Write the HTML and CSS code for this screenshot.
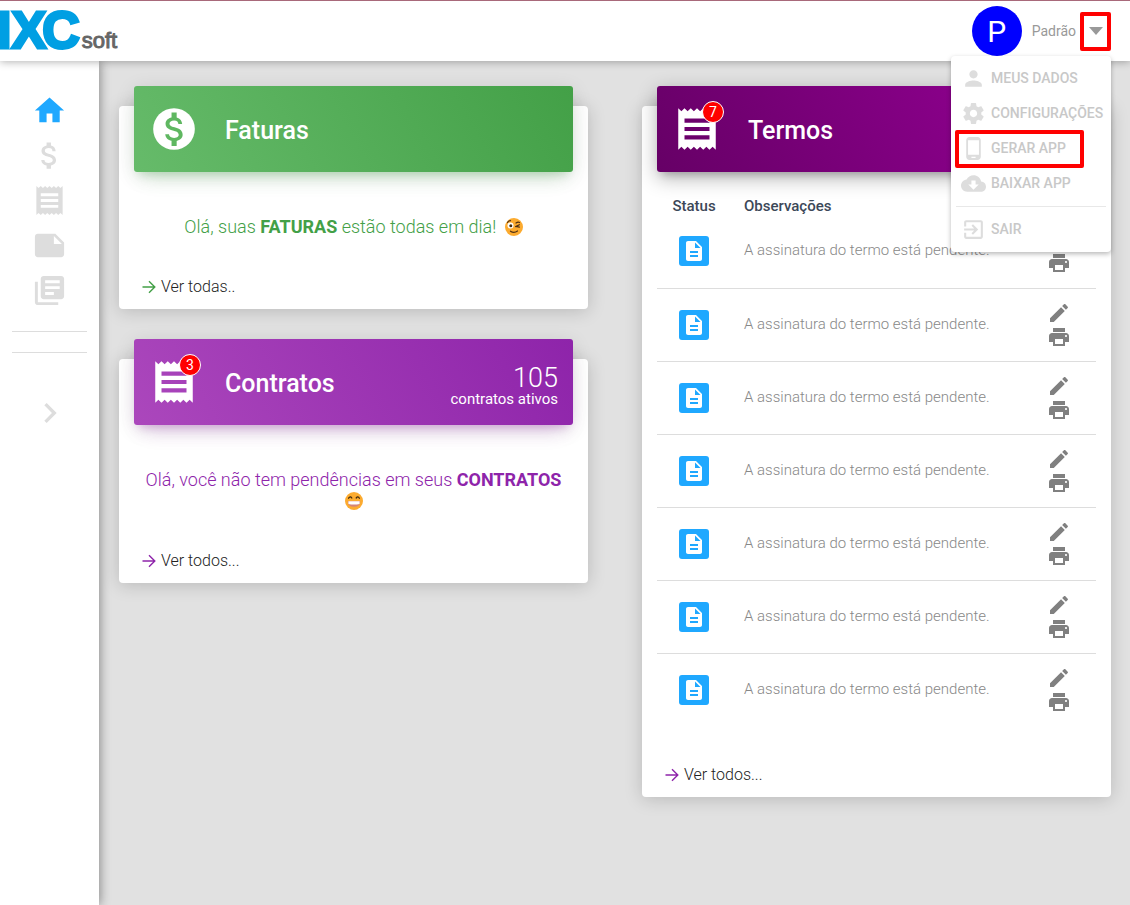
FILE: index.html
```html
<!DOCTYPE html>
<html lang="pt-BR">
<head>
<meta charset="utf-8">
<title>IXC Soft</title>
<link rel="stylesheet" href="styles.css">
</head>
<body>
<svg class="sprite" aria-hidden="true">
  <symbol id="home" viewBox="0 0 24 24"><path d="M10 20v-6h4v6h5v-8h3L12 3 2 12h3v8z"/></symbol>
  <symbol id="money" viewBox="0 0 24 24"><path d="M11.8 10.9c-2.27-.59-3-1.2-3-2.15 0-1.09 1.01-1.85 2.7-1.85 1.78 0 2.44.85 2.5 2.1h2.21c-.07-1.72-1.12-3.3-3.21-3.81V3h-3v2.16c-1.94.42-3.5 1.68-3.5 3.61 0 2.31 1.91 3.46 4.7 4.13 2.5.6 3 1.48 3 2.41 0 .69-.49 1.79-2.7 1.79-2.06 0-2.87-.92-2.98-2.1h-2.2c.12 2.19 1.76 3.42 3.68 3.83V21h3v-2.15c1.95-.37 3.5-1.5 3.5-3.55 0-2.84-2.43-3.81-4.7-4.4z"/></symbol>
  <symbol id="receipt" viewBox="0 0 24 24"><path d="M18 17H6v-2h12v2zm0-4H6v-2h12v2zm0-4H6V7h12v2zM3 22l1.5-1.5L6 22l1.5-1.5L9 22l1.5-1.5L12 22l1.5-1.5L15 22l1.5-1.5L18 22l1.5-1.5L21 22V2l-1.500 1.500L18 2l-1.500 1.500L15 2l-1.500 1.500L12 2l-1.500 1.500L9 2 7.500 3.500 6 2 4.500 3.500 3 2v20z"/></symbol>
  <symbol id="note" viewBox="0 0 24 24"><path d="M22 10l-6-6H4c-1.100 0-2 .9-2 2v12.010c0 1.100.9 1.990 2 1.990l16-.010c1.100 0 2-.890 2-1.990v-8zm-7-4.500l5.500 5.500H15V5.500z"/></symbol>
  <symbol id="library" viewBox="0 0 24 24"><path d="M4 6H2v14c0 1.100.9 2 2 2h14v-2H4V6zm16-4H8c-1.100 0-2 .9-2 2v12c0 1.100.9 2 2 2h12c1.100 0 2-.9 2-2V4c0-1.100-.9-2-2-2zm-1 9H9V9h10v2zm-4 4H9v-2h6v2zm4-8H9V5h10v2z"/></symbol>
  <symbol id="chevron" viewBox="0 0 24 24"><path d="M10 6L8.590 7.410 13.170 12l-4.580 4.590L10 18l6-6z"/></symbol>
  <symbol id="coin" viewBox="0 0 24 24"><path d="M12 2a10 10 0 1 0 0 20 10 10 0 0 0 0-20z"/><path fill="#5fb761" transform="translate(2.620 2.250) scale(.82)" d="M11.8 10.9c-2.27-.59-3-1.2-3-2.15 0-1.09 1.01-1.85 2.7-1.85 1.78 0 2.44.85 2.5 2.1h2.21c-.07-1.72-1.12-3.3-3.21-3.81V2.200h-3v2.960c-1.94.42-3.5 1.68-3.5 3.61 0 2.31 1.91 3.46 4.7 4.13 2.5.6 3 1.48 3 2.41 0 .69-.49 1.79-2.7 1.79-2.06 0-2.87-.92-2.98-2.1h-2.2c.12 2.19 1.76 3.42 3.68 3.83V21.800h3v-2.950c1.95-.37 3.5-1.5 3.5-3.55 0-2.84-2.43-3.81-4.7-4.4z"/></symbol>
  <symbol id="person" viewBox="0 0 24 24"><path d="M12 12c2.210 0 4-1.790 4-4s-1.790-4-4-4-4 1.790-4 4 1.790 4 4 4zm0 2c-2.670 0-8 1.340-8 4v2h16v-2c0-2.660-5.330-4-8-4z"/></symbol>
  <symbol id="gear" viewBox="0 0 24 24"><path d="M19.430 12.980c.04-.32.07-.64.07-.98s-.03-.66-.07-.98l2.110-1.650c.19-.15.24-.42.12-.64l-2-3.460c-.12-.22-.39-.3-.61-.22l-2.490 1c-.52-.4-1.080-.73-1.690-.98l-.38-2.650C14.460 2.180 14.250 2 14 2h-4c-.25 0-.46.18-.49.42l-.38 2.650c-.61.25-1.170.59-1.690.98l-2.490-1c-.23-.09-.49 0-.61.22l-2 3.460c-.13.22-.07.49.12.64l2.110 1.650c-.04.32-.07.65-.07.98s.03.66.07.98l-2.110 1.650c-.19.15-.24.42-.12.64l2 3.460c.12.22.39.3.61.22l2.490-1c.52.4 1.080.73 1.690.98l.38 2.650c.03.24.24.42.49.42h4c.25 0 .46-.18.49-.42l.38-2.650c.61-.25 1.170-.59 1.690-.98l2.490 1c.23.09.49 0 .61-.22l2-3.460c.12-.22.07-.49-.12-.64l-2.110-1.650zM12 15.500c-1.930 0-3.500-1.570-3.500-3.500s1.570-3.500 3.500-3.500 3.500 1.570 3.500 3.500-1.570 3.500-3.500 3.500z"/></symbol>
  <symbol id="phone" viewBox="0 0 24 24"><path d="M16 1H8C6.340 1 5 2.340 5 4v16c0 1.660 1.340 3 3 3h8c1.660 0 3-1.340 3-3V4c0-1.660-1.340-3-3-3zm-2 20h-4v-1h4v1zm3.250-3H6.750V4h10.500v14z"/></symbol>
  <symbol id="cloud" viewBox="0 0 24 24"><path d="M19.350 10.040C18.670 6.590 15.640 4 12 4 9.110 4 6.600 5.640 5.350 8.040 2.340 8.360 0 10.910 0 14c0 3.310 2.690 6 6 6h13c2.760 0 5-2.240 5-5 0-2.640-2.050-4.780-4.650-4.960zM17 13l-5 5-5-5h3V9h4v4h3z"/></symbol>
  <symbol id="exit" viewBox="0 0 24 24"><path d="M10.090 15.590L11.500 17l5-5-5-5-1.410 1.410L12.670 11H3v2h9.670l-2.580 2.590zM19 3H5c-1.110 0-2 .9-2 2v4h2V5h14v14H5v-4H3v4c0 1.100.89 2 2 2h14c1.100 0 2-.9 2-2V5c0-1.100-.9-2-2-2z"/></symbol>
  <symbol id="doc" viewBox="0 0 24 24"><path d="M14 2H6c-1.100 0-1.990.9-1.990 2L4 20c0 1.100.89 2 1.990 2H18c1.100 0 2-.9 2-2V8l-6-6zm2 16H8v-2h8v2zm0-4H8v-2h8v2zm-3-5V3.500L18.500 9H13z"/></symbol>
  <symbol id="pencil" viewBox="0 0 24 24"><path d="M3 17.250V21h3.750L17.810 9.940l-3.750-3.750L3 17.250zM20.710 7.040c.39-.39.39-1.020 0-1.410l-2.340-2.340c-.39-.39-1.020-.39-1.410 0l-1.830 1.830 3.750 3.750 1.830-1.830z"/></symbol>
  <symbol id="print" viewBox="0 0 24 24"><path d="M19 8H5c-1.660 0-3 1.340-3 3v6h4v4h12v-4h4v-6c0-1.660-1.340-3-3-3zm-3 11H8v-5h8v5zm3-7c-.55 0-1-.45-1-1s.45-1 1-1 1 .45 1 1-.45 1-1 1zm-1-9H6v4h12V3z"/></symbol>
  <symbol id="arrow" viewBox="0 0 14 14"><path d="M.5 7h12M7 1.200 12.800 7 7 12.800" fill="none" stroke="currentColor" stroke-width="1.400"/></symbol>
</svg>

<header class="topbar">
  <a class="logo" href="#" aria-label="IXC soft"><span class="logo-main"><span>I</span><span>X</span><span class="logo-c">C</span></span><span class="logo-sub">soft</span></a>
  <div class="user">
    <span class="avatar">P</span>
    <span class="user-name">Padrão</span>
    <button class="caret" aria-label="Abrir menu"><svg viewBox="0 0 14 8"><path d="M0 0h14L7 8z"/></svg></button>
    <nav class="menu">
      <button class="menu-item"><svg><use href="#person"/></svg>MEUS DADOS</button>
      <button class="menu-item"><svg><use href="#gear"/></svg>CONFIGURAÇÕES</button>
      <button class="menu-item marked"><svg><use href="#phone"/></svg>GERAR APP</button>
      <button class="menu-item"><svg><use href="#cloud"/></svg>BAIXAR APP</button>
      <hr class="menu-line">
      <button class="menu-item"><svg><use href="#exit"/></svg>SAIR</button>
    </nav>
  </div>
</header>

<div class="shell">
  <nav class="sidebar">
    <a class="side-link active" href="#" aria-label="Início"><svg><use href="#home"/></svg></a>
    <a class="side-link" href="#" aria-label="Faturas"><svg><use href="#money"/></svg></a>
    <a class="side-link" href="#" aria-label="Contratos"><svg><use href="#receipt"/></svg></a>
    <a class="side-link" href="#" aria-label="Notas"><svg><use href="#note"/></svg></a>
    <a class="side-link" href="#" aria-label="Termos"><svg><use href="#library"/></svg></a>
    <div class="side-lines"></div>
    <button class="side-expand" aria-label="Expandir"><svg><use href="#chevron"/></svg></button>
  </nav>

  <main class="content">
    <div class="column">
      <section class="card">
        <div class="card-head green">
          <span class="card-icon"><svg><use href="#coin"/></svg></span>
          <h2>Faturas</h2>
        </div>
        <p class="message green-text">Olá, suas <b>FATURAS</b> estão todas em dia!
          <svg class="emoji emoji-gap" viewBox="0 0 18 18" role="img" aria-label="piscando"><circle cx="9" cy="9" r="9" fill="#fcab2f"/><circle cx="5.500" cy="7.600" r="3" fill="#fff"/><circle cx="5.800" cy="7.800" r="1.500" fill="#422b0d"/><path d="M2.500 4.500Q3.500 2.700 5.500 2.700M11 5q2-1.500 3.500-.5M10.600 8.600l3.800-1.900M11 8.400l3.400.8M5.500 13.200q3.500 2.400 7-.2" fill="none" stroke="#513114" stroke-width="1.200" stroke-linecap="round"/></svg></p>
        <a class="more green-text" href="#"><svg><use href="#arrow"/></svg><span>Ver todas..</span></a>
      </section>

      <section class="card">
        <div class="card-head purple">
          <span class="card-icon"><svg><use href="#receipt"/></svg><span class="badge">3</span></span>
          <h2>Contratos</h2>
          <div class="total"><span class="total-number">105</span><span class="total-label">contratos ativos</span></div>
        </div>
        <p class="message purple-text">Olá, você não tem pendências em seus <b>CONTRATOS</b>
          <svg class="emoji" viewBox="0 0 18 18" role="img" aria-label="sorrindo"><circle cx="9" cy="9" r="9" fill="#fcab2f"/><path d="M3.600 6.200q1.700-2.600 3.200-.2M11.200 6q1.700-2.400 3.200.2" fill="none" stroke="#422b0d" stroke-width="1.300" stroke-linecap="round"/><path d="M2.800 9h12.400q.3 5.800-6.200 5.800T2.800 9z" fill="#d58478"/><path d="M3.400 9.300h11.200v2.800q-5.600 1-11.200 0z" fill="#fff"/></svg></p>
        <a class="more purple-text" href="#"><svg><use href="#arrow"/></svg><span>Ver todos...</span></a>
      </section>
    </div>

    <div class="column">
      <section class="card">
        <div class="card-head dark">
          <span class="card-icon"><svg><use href="#receipt"/></svg><span class="badge">7</span></span>
          <h2>Termos</h2>
        </div>
        <table class="terms">
          <thead><tr><th class="col-status">Status</th><th class="col-note">Observações</th><th class="col-actions"></th></tr></thead>
          <tbody>
            <tr><td class="col-status"><span class="status"><svg><use href="#doc"/></svg></span></td><td class="col-note">A assinatura do termo está pendente.</td><td class="col-actions"><button aria-label="Assinar"><svg><use href="#pencil"/></svg></button><button aria-label="Imprimir"><svg><use href="#print"/></svg></button></td></tr>
            <tr><td class="col-status"><span class="status"><svg><use href="#doc"/></svg></span></td><td class="col-note">A assinatura do termo está pendente.</td><td class="col-actions"><button aria-label="Assinar"><svg><use href="#pencil"/></svg></button><button aria-label="Imprimir"><svg><use href="#print"/></svg></button></td></tr>
            <tr><td class="col-status"><span class="status"><svg><use href="#doc"/></svg></span></td><td class="col-note">A assinatura do termo está pendente.</td><td class="col-actions"><button aria-label="Assinar"><svg><use href="#pencil"/></svg></button><button aria-label="Imprimir"><svg><use href="#print"/></svg></button></td></tr>
            <tr><td class="col-status"><span class="status"><svg><use href="#doc"/></svg></span></td><td class="col-note">A assinatura do termo está pendente.</td><td class="col-actions"><button aria-label="Assinar"><svg><use href="#pencil"/></svg></button><button aria-label="Imprimir"><svg><use href="#print"/></svg></button></td></tr>
            <tr><td class="col-status"><span class="status"><svg><use href="#doc"/></svg></span></td><td class="col-note">A assinatura do termo está pendente.</td><td class="col-actions"><button aria-label="Assinar"><svg><use href="#pencil"/></svg></button><button aria-label="Imprimir"><svg><use href="#print"/></svg></button></td></tr>
            <tr><td class="col-status"><span class="status"><svg><use href="#doc"/></svg></span></td><td class="col-note">A assinatura do termo está pendente.</td><td class="col-actions"><button aria-label="Assinar"><svg><use href="#pencil"/></svg></button><button aria-label="Imprimir"><svg><use href="#print"/></svg></button></td></tr>
            <tr><td class="col-status"><span class="status"><svg><use href="#doc"/></svg></span></td><td class="col-note">A assinatura do termo está pendente.</td><td class="col-actions"><button aria-label="Assinar"><svg><use href="#pencil"/></svg></button><button aria-label="Imprimir"><svg><use href="#print"/></svg></button></td></tr>
          </tbody>
        </table>
        <a class="more purple-text" href="#"><svg><use href="#arrow"/></svg><span>Ver todos...</span></a>
      </section>
    </div>
  </main>
</div>
</body>
</html>
```
FILE: styles.css
```css
* {
  box-sizing: border-box;
}

body {
  margin: 0;
  min-height: 100vh;
  display: flex;
  flex-direction: column;
  background: #e1e1e1;
  font-family: Roboto, "Liberation Sans", sans-serif;
  font-weight: 300;
}

button {
  border: 0;
  padding: 0;
  background: none;
  font: inherit;
  cursor: pointer;
}

a {
  text-decoration: none;
}

b {
  font-weight: 700;
}

svg {
  display: block;
  fill: currentColor;
}

.sprite {
  position: absolute;
  width: 0;
  height: 0;
}

/* Top bar */
.topbar {
  position: relative;
  z-index: 3;
  display: flex;
  justify-content: space-between;
  align-items: center;
  height: 61px;
  padding-right: 19px;
  border-top: 1px solid #a8697a;
  background: #fff;
  box-shadow: 0 1px 8px rgba(0, 0, 0, .3);
}

.logo {
  display: flex;
  align-items: baseline;
  gap: 2px;
  margin-left: -3px;
  padding-bottom: 3px;
  font-family: "Liberation Sans", Arial, sans-serif;
}

.logo-main {
  color: #009fe3;
  font-size: 52px;
  font-weight: 700;
  line-height: 56px;
  -webkit-text-stroke: 3px #009fe3;
}

.logo-c {
  margin-left: -4px;
}

.logo-sub {
  color: #666;
  font-size: 22px;
  font-weight: 400;
  -webkit-text-stroke: 1px #666;
}

.user {
  position: relative;
  display: flex;
  align-items: center;
}

.avatar {
  display: grid;
  place-items: center;
  width: 50px;
  height: 50px;
  border-radius: 50%;
  background: #00f;
  color: #fff;
  font-size: 30px;
  font-weight: 400;
}

.user-name {
  margin: 0 4px 0 10px;
  color: #999;
  font-size: 14px;
  font-weight: 400;
}

.caret {
  display: grid;
  place-items: center;
  width: 31px;
  height: 39px;
  border: 4px solid #f00;
  border-radius: 2px;
  color: #999;
}

.caret svg {
  width: 14px;
  height: 8px;
}

.menu {
  position: absolute;
  top: 100%;
  right: 0;
  width: 160px;
  padding: 5px 0;
  border-radius: 4px;
  background: #fff;
  box-shadow: 0 2px 5px rgba(0, 0, 0, .28);
}

.menu-item {
  position: relative;
  display: flex;
  align-items: center;
  gap: 5px;
  width: 100%;
  height: 35px;
  padding: 0 0 1px 10px;
  color: #c8c8c8;
  font-size: 14px;
  font-weight: 500;
  white-space: nowrap;
}

.menu-item svg {
  flex: none;
  width: 25px;
  height: 25px;
  color: #ddd;
}

.marked::after {
  content: "";
  position: absolute;
  inset: -1px 27px -2px 4px;
  border: 4px solid #f00;
  border-radius: 2px;
}

.menu-line {
  height: 1px;
  margin: 5px 5px;
  border: 0;
  background: #e8e8e8;
}

/* Sidebar */
.shell {
  flex: 1;
  display: flex;
}

.sidebar {
  position: relative;
  z-index: 2;
  flex: none;
  display: flex;
  flex-direction: column;
  align-items: center;
  gap: 10px;
  width: 99px;
  padding-top: 32px;
  background: #fff;
  box-shadow: 1px 0 10px rgba(0, 0, 0, .4);
}

.side-link,
.side-expand {
  color: #ddd;
}

.side-link svg {
  width: 35px;
  height: 35px;
}

.active {
  color: #1fa8ff;
}

.side-lines {
  align-self: stretch;
  height: 22px;
  margin: 13px 12px 30px;
  border: solid #ddd;
  border-width: 1px 0;
}

.side-expand svg {
  width: 40px;
  height: 40px;
}

/* Cards */
.content {
  flex: 1;
  display: grid;
  grid-template-columns: 1fr 1fr;
  align-items: start;
  gap: 54px;
  padding: 45px 19px 45px 20px;
}

.column {
  display: grid;
  gap: 50px;
}

.card {
  padding: 0 15px 13px;
  border-radius: 4px;
  background: #fff;
  box-shadow: 0 2px 18px rgba(0, 0, 0, .18);
}

.card-head {
  display: flex;
  align-items: center;
  height: 86px;
  margin-top: -20px;
  padding: 0 15px;
  border-radius: 3px;
  color: #fff;
}

.green {
  background: linear-gradient(60deg, #66bb6a, #43a047);
  box-shadow: 0 12px 20px -10px rgba(76, 175, 80, .28), 0 4px 20px rgba(0, 0, 0, .12), 0 7px 8px -5px rgba(76, 175, 80, .2);
}

.purple {
  background: linear-gradient(60deg, #ab47bc, #8e24aa);
  box-shadow: 0 12px 20px -10px rgba(156, 39, 176, .28), 0 4px 20px rgba(0, 0, 0, .12), 0 7px 8px -5px rgba(156, 39, 176, .2);
}

.dark {
  background: linear-gradient(60deg, #606, #8b008b 75%);
  box-shadow: 0 6px 20px rgba(0, 0, 0, .3), 0 7px 8px -5px rgba(0, 0, 0, .2);
}

.card-icon {
  position: relative;
}

.card-icon svg {
  width: 50px;
  height: 50px;
}

.badge {
  position: absolute;
  top: -3px;
  right: -2px;
  width: 22px;
  height: 22px;
  border: 1px solid #fff;
  border-radius: 50%;
  background: #f00;
  font-size: 14px;
  font-weight: 400;
  line-height: 20px;
  text-align: center;
}

.card-head h2 {
  margin: 2px 0 0 26px;
  font-size: 25px;
  font-weight: 500;
}

.total {
  display: grid;
  margin: 8px 0 0 auto;
  text-align: right;
}

.total-number {
  font-size: 27px;
  line-height: 26px;
}

.total-label {
  font-size: 15px;
  font-weight: 400;
  line-height: 16px;
}

.message {
  margin: 44px 0 41px;
  padding: 0 10px;
  font-size: 18px;
  line-height: 21px;
  text-align: center;
}

.emoji {
  display: inline-block;
  width: 18px;
  height: 18px;
  vertical-align: -3px;
}

.emoji-gap {
  margin-left: 4px;
}

.green-text {
  color: #43a047;
}

.purple-text {
  color: #8e24aa;
}

.more {
  display: flex;
  align-items: center;
  gap: 5px;
  padding-left: 8px;
  font-size: 16px;
  line-height: 18px;
}

.more svg {
  width: 14px;
  height: 14px;
}

.more span {
  color: #222;
}

/* Terms table */
.terms {
  width: 100%;
  margin-bottom: 40px;
  border-collapse: collapse;
}

.terms th {
  height: 42px;
  padding: 25px 0 0;
  color: #3c4858;
  font-size: 15px;
  font-weight: 500;
}

.terms td {
  height: 73px;
  padding: 0;
  color: #888;
  font-size: 15px;
}

.terms tbody tr + tr {
  border-top: 1px solid #ddd;
}

.terms .col-status,
.terms .col-actions {
  width: 74px;
  text-align: center;
}

.terms .col-note {
  padding-left: 13px;
  text-align: left;
}

.terms td.col-note {
  padding-bottom: 2px;
}

.terms button {
  display: block;
  margin: 0 auto;
  color: #808080;
}

.terms button svg {
  width: 24px;
  height: 24px;
}

.status {
  display: grid;
  place-items: center;
  width: 30px;
  height: 30px;
  margin: 0 auto;
  border-radius: 3px;
  background: #1fa8ff;
  color: #fff;
}

.status svg {
  width: 24px;
  height: 24px;
}
```
